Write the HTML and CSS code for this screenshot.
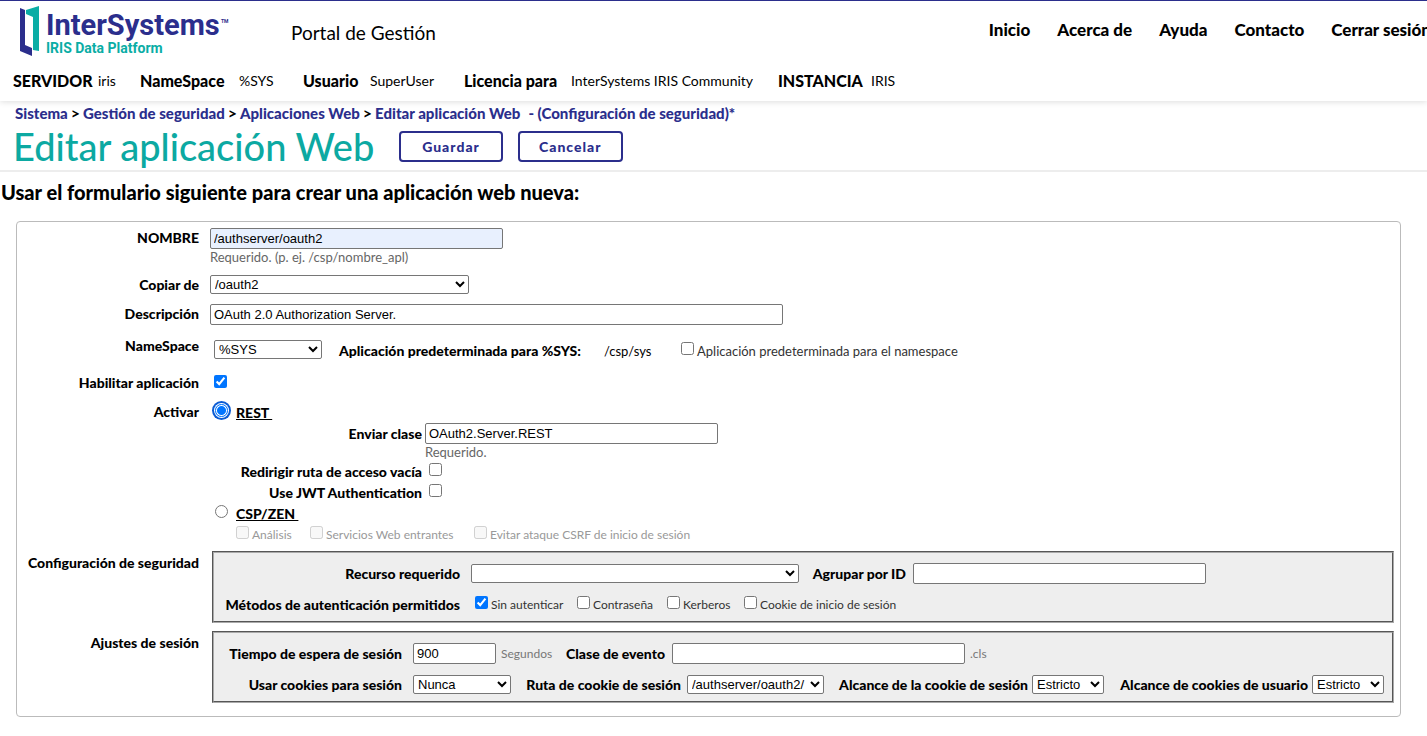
FILE: index.html
```html
<!DOCTYPE html>
<html lang="es">
<head>
<meta charset="utf-8">
<title>Editar aplicación Web</title>
<link rel="stylesheet" href="styles.css">
</head>
<body>
<header class="header">
  <div class="topbar">
    <svg class="logo" width="212" height="52" viewBox="0 0 212 52" role="img" aria-label="InterSystems IRIS Data Platform">
      <path fill="#0aada5" d="M6 3 19 -1V44L13 43V10L6 7Z"/>
      <path fill="#2b2e8c" d="M0 1 5 3V38L12 41V49L0 44Z"/>
      <text class="logo-name" x="26" y="28">InterSystems</text>
      <text class="logo-tm" x="201" y="16">TM</text>
      <text class="logo-sub" x="26" y="46">IRIS Data Platform</text>
    </svg>
    <div class="portal">Portal de Gestión</div>
    <nav class="nav">
      <a href="#">Inicio</a><a href="#">Acerca de</a><a href="#">Ayuda</a><a href="#">Contacto</a><a href="#">Cerrar sesión</a>
    </nav>
  </div>
  <div class="info">
    <span class="i1"><b>SERVIDOR</b>iris</span>
    <span class="i2"><b>NameSpace</b>%SYS</span>
    <span class="i3"><b>Usuario</b>SuperUser</span>
    <span class="i4"><b>Licencia para</b>InterSystems IRIS Community</span>
    <span class="i5"><b>INSTANCIA</b>IRIS</span>
  </div>
</header>
<section class="ribbon">
  <div class="crumbs"><a href="#">Sistema</a><i>&gt;</i><a href="#">Gestión de seguridad</a><i>&gt;</i><a href="#">Aplicaciones Web</a><i>&gt;</i><a href="#">Editar aplicación Web</a><span class="where">- (Configuración de seguridad)*</span></div>
  <div class="title-row">
    <h1>Editar aplicación Web</h1>
    <button type="button">Guardar</button>
    <button type="button">Cancelar</button>
  </div>
</section>
<h2>Usar el formulario siguiente para crear una aplicación web nueva:</h2>
<form class="panel">
  <div class="row">
    <label class="name" for="nombre">NOMBRE</label>
    <div class="field">
      <input class="text w-m filled" id="nombre" type="text" value="/authserver/oauth2">
      <div class="hint">Requerido. (p. ej. /csp/nombre_apl)</div>
    </div>
  </div>
  <div class="row">
    <label class="name" for="copiar">Copiar de</label>
    <div class="field"><select class="w-copy" id="copiar"><option>/oauth2</option></select></div>
  </div>
  <div class="row">
    <label class="name" for="desc">Descripción</label>
    <div class="field"><input class="text w-l" id="desc" type="text" value="OAuth 2.0 Authorization Server."></div>
  </div>
  <div class="row row-ns">
    <label class="name" for="ns">NameSpace</label>
    <div class="field line inset">
      <select class="w-ns" id="ns"><option>%SYS</option></select>
      <b class="ns-default">Aplicación predeterminada para %SYS:</b>
      <span class="ns-path">/csp/sys</span>
      <label class="check ns-check"><input type="checkbox">Aplicación predeterminada para el namespace</label>
    </div>
  </div>
  <div class="row">
    <label class="name" for="hab">Habilitar aplicación</label>
    <div class="field line inset"><input id="hab" type="checkbox" checked></div>
  </div>
  <div class="row row-act">
    <span class="name">Activar</span>
    <div class="field">
      <div class="line choice"><input class="ringed" id="rest" type="radio" name="act" checked><label class="option" for="rest">REST </label></div>
      <div class="sub"><label for="clase">Enviar clase</label><input class="text w-m" id="clase" type="text" value="OAuth2.Server.REST"></div>
      <div class="hint hint-sub">Requerido.</div>
      <div class="sub"><label for="redir">Redirigir ruta de acceso vacía</label><input class="gap-l" id="redir" type="checkbox"></div>
      <div class="sub"><label for="jwt">Use JWT Authentication</label><input class="gap-l" id="jwt" type="checkbox"></div>
      <div class="line choice"><input id="csp" type="radio" name="act"><label class="option" for="csp">CSP/ZEN </label></div>
      <div class="line disabled">
        <label class="check c1"><input type="checkbox" disabled>Análisis</label>
        <label class="check c2"><input type="checkbox" disabled>Servicios Web entrantes</label>
        <label class="check"><input type="checkbox" disabled>Evitar ataque CSRF de inicio de sesión</label>
      </div>
    </div>
  </div>
  <div class="row row-set">
    <span class="name">Configuración de seguridad</span>
    <fieldset class="set set-sec">
      <div class="set-line">
        <label class="lead" for="recurso">Recurso requerido</label>
        <select class="w-res" id="recurso"><option></option></select>
        <label class="mid m-group" for="agrupar">Agrupar por ID</label>
        <input class="text w-m" id="agrupar" type="text">
      </div>
      <div class="set-line">
        <span class="lead">Métodos de autenticación permitidos</span>
        <label class="check k1"><input type="checkbox" checked>Sin autenticar</label>
        <label class="check k2"><input type="checkbox">Contraseña</label>
        <label class="check k3"><input type="checkbox">Kerberos</label>
        <label class="check"><input type="checkbox">Cookie de inicio de sesión</label>
      </div>
    </fieldset>
  </div>
  <div class="row row-set">
    <span class="name">Ajustes de sesión</span>
    <fieldset class="set set-ses">
      <div class="set-line">
        <label class="lead" for="tiempo">Tiempo de espera de sesión</label>
        <input class="text w-s" id="tiempo" type="text" value="900">
        <span class="unit u-sec">Segundos</span>
        <label class="mid m-event" for="evento">Clase de evento</label>
        <input class="text w-m" id="evento" type="text">
        <span class="unit">.cls</span>
      </div>
      <div class="set-line">
        <label class="lead" for="cookies">Usar cookies para sesión</label>
        <select class="w-use" id="cookies"><option>Nunca</option></select>
        <label class="mid m-path" for="ruta">Ruta de cookie de sesión</label>
        <select class="w-path" id="ruta"><option>/authserver/oauth2/</option></select>
        <label class="mid m-scope" for="alc1">Alcance de la cookie de sesión</label>
        <select class="w-scope" id="alc1"><option>Estricto</option></select>
        <label class="mid m-scope" for="alc2">Alcance de cookies de usuario</label>
        <select class="w-scope" id="alc2"><option>Estricto</option></select>
      </div>
    </fieldset>
  </div>
</form>
</body>
</html>
```
FILE: styles.css
```css
* { box-sizing: border-box; }
body {
  margin: 0;
  overflow-x: hidden;
  background: #fff;
  color: #000;
  font: 14px/20px Lato, "Open Sans", sans-serif;
}
a { text-decoration: none; color: inherit; }
b { font-weight: 900; }

/* Header */
.header {
  position: relative;
  overflow-x: clip;
  border-top: 1px solid #2b2e8c;
  background: #fff;
  box-shadow: 0 1px 6px #0002;
}
.topbar { display: flex; height: 66px; padding: 6px 0 0 20px; white-space: nowrap; }
.logo { flex: none; overflow: visible; }
.logo-name { font: 700 29px Roboto, sans-serif; fill: #2b2e8c; }
.logo-tm { font: 700 5px Roboto, sans-serif; fill: #2b2e8c; }
.logo-sub { font: 700 14px Roboto, sans-serif; fill: #0aada5; }
.portal { padding: 14px 0 0 59px; font-size: 19px; line-height: 24px; }
.nav {
  display: flex;
  gap: 27px;
  margin: 13px -4px 0 auto;
  font-size: 17px;
  font-weight: 900;
}
.info { display: flex; height: 34px; padding: 4px 0 0 13px; white-space: nowrap; }
.info span { display: flex; }
.info b { font-size: 16px; }
.i1 { width: 127px; }
.i1 b { width: 85px; }
.i2 { width: 163px; }
.i2 b { width: 99px; }
.i3 { width: 161px; }
.i3 b { width: 67px; }
.i4 { width: 314px; }
.i4 b { width: 107px; }
.i5 b { width: 93px; }

/* Ribbon */
.ribbon { border-bottom: 2px solid #ededed; }
.crumbs { height: 21px; padding: 2px 0 0 15px; color: #2b2e8c; font-size: 15px; font-weight: 900; white-space: nowrap; }
.crumbs i { margin: 0 3px; color: #000; font-size: 16px; font-style: normal; font-weight: 700; }
.where { margin-left: 8px; }
.title-row { display: flex; height: 48px; padding: 6px 0 0 13px; gap: 15px; }
h1 { width: 371px; margin: 0; color: #0ca9a2; font-size: 38px; font-weight: 500; line-height: 36px; white-space: nowrap; }
.title-row button {
  min-width: 104px;
  height: 31px;
  margin-top: 3px;
  padding: 0 19px;
  border: 2px solid #2b2e8c;
  border-radius: 4px;
  background: #fff;
  color: #2b2e8c;
  font: 900 14px Lato, sans-serif;
  letter-spacing: 1px;
}
h2 { margin: 0; padding: 8px 0 0 1px; font-size: 20px; font-weight: 900; line-height: 24px; }

/* Form panel */
.panel {
  margin: 17px 26px 0 16px;
  padding: 6px 6px 5px 0;
  border: 1px solid #bbb;
  border-radius: 4px;
}
.row { display: grid; grid-template-columns: 182px 1fr; column-gap: 11px; margin-bottom: 9px; white-space: nowrap; }
.row-ns { min-height: 30px; }
.row-act { margin-bottom: 6px; }
.row-set { margin-bottom: 8px; column-gap: 13px; }
.name { font-weight: 900; text-align: right; }
.row-set .name, .row-ns .name { padding-top: 2px; }
.line { display: flex; align-items: center; min-height: 20px; }
.inset { padding-left: 4px; }
.choice { padding-left: 5px; }
.row-act .line, .sub { min-height: 21px; }
.row-ns .line { height: 30px; }

input, select { margin: 0; font: 13px "Liberation Sans", Arial, sans-serif; color: #000; }
.text, select { display: block; flex: none; border: 1px solid #767676; border-radius: 2px; background: #fff; }
.text { height: 21px; padding: 1px 3px; }
select { height: 19px; padding: 0; }
.filled { background: #e8f0fe; }
.w-s { width: 83px; }
.w-m { width: 293px; }
.w-l { width: 573px; }
.w-copy { width: 259px; }
.w-ns { width: 108px; }
.w-res { width: 328px; }
.w-use { width: 98px; }
.w-path { width: 137px; }
.w-scope { width: 72px; }

input[type="checkbox"], input[type="radio"] { flex: none; width: 13px; height: 13px; margin-bottom: 4px; }
.ringed {
  appearance: none;
  border: 1px solid #0075ff;
  border-radius: 50%;
  background: #fff;
  box-shadow: 0 0 0 1px #fff, 0 0 0 3px #0a5bd3;
}
.ringed:checked { background: radial-gradient(circle, #0075ff 4px, #fff 5px); }
.hint { height: 17px; color: #666; font-size: 13px; line-height: 16px; }
.hint-sub { padding-left: 215px; }
.option { margin-left: 8px; font-weight: 900; text-decoration: underline; white-space: pre; }
.sub { display: grid; grid-template-columns: 212px auto; justify-content: start; align-items: center; column-gap: 3px; }
.sub label { font-weight: 900; text-align: right; }
.gap-l { margin-left: 4px; }
.check { display: flex; align-items: center; gap: 3px; color: #333; font-size: 12px; }
.ns-default, .ns-path, .ns-check { margin-top: 3px; font-size: 14px; }
.ns-default { width: 265px; margin-left: 17px; }
.ns-path { width: 77px; font-size: 13px; }
.ns-check { font-size: 13px; }
.disabled { padding-left: 26px; }
.disabled .check { color: #999; }
.c1 { width: 74px; }
.c2 { width: 164px; }

/* Setting groups */
.set { min-width: 0; height: 72px; margin: 0; padding: 5px 0 0 8px; border: 2px groove #aaa; background: #eee; }
.set-line { display: flex; align-items: center; height: 31px; }
.lead, .mid { flex: none; font-weight: 900; text-align: right; }
.lead { margin-right: 11px; }
.set-sec .lead { width: 238px; }
.set-ses .lead { width: 180px; }
.mid { margin-right: 4px; }
.m-group { width: 107px; margin-right: 7px; }
.m-event { width: 110px; margin-right: 7px; }
.m-path { width: 170px; margin-right: 6px; }
.m-scope { width: 204px; }
.unit { margin-left: 5px; color: #777; font-size: 12px; }
.u-sec { width: 54px; }
.k1 { width: 102px; margin-left: 4px; }
.k2 { width: 90px; }
.k3 { width: 77px; }
```
